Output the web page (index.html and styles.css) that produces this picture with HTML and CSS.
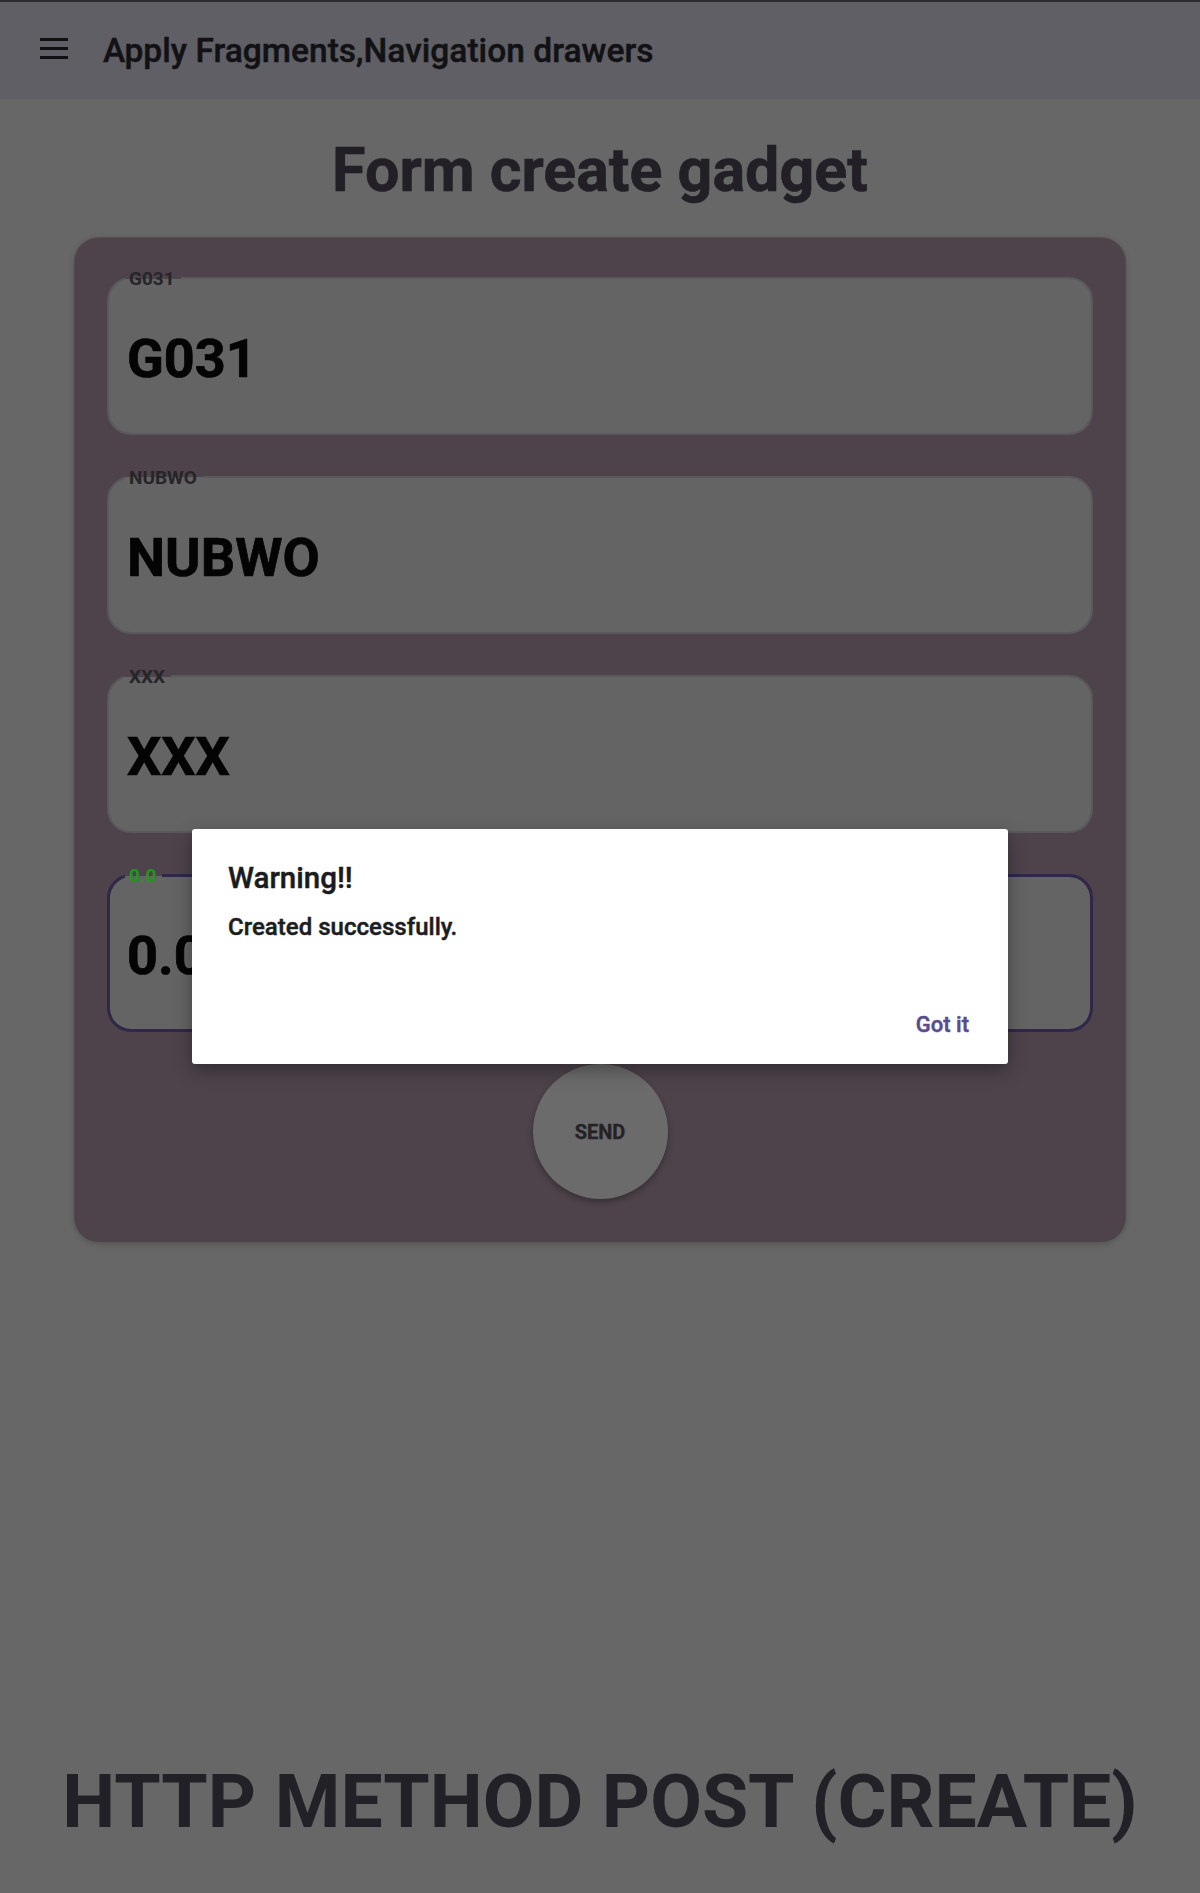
FILE: index.html
```html
<!DOCTYPE html>
<html>
<head>
<meta charset="utf-8">
<link rel="stylesheet" href="styles.css">
</head>
<body>
<div class="page">
  <header class="appbar">
    <svg class="menu" width="28" height="24" viewBox="0 0 28 24"><path d="M0 2.5H28M0 11.5H28M0 20.5H28" stroke="#111114" stroke-width="3"/></svg>
    <span class="appbar-title">Apply Fragments,Navigation drawers</span>
  </header>
  <h1 class="heading">Form create gadget</h1>
  <section class="card">
    <div class="field"><span class="label">G031</span><span class="value">G031</span></div>
    <div class="field"><span class="label">NUBWO</span><span class="value">NUBWO</span></div>
    <div class="field"><span class="label">XXX</span><span class="value">XXX</span></div>
    <div class="field focused"><span class="label">0.0</span><span class="value">0.0</span></div>
    <div class="send">SEND</div>
  </section>
  <div class="footer-title">HTTP METHOD POST (CREATE)</div>
  <div class="dialog">
    <div class="dialog-title">Warning!!</div>
    <div class="dialog-body">Created successfully.</div>
    <div class="dialog-actions"><span class="dialog-btn">Got it</span></div>
  </div>
</div>
</body>
</html>
```
FILE: styles.css
```css
html, body {
  margin: 0;
  padding: 0;
}
body {
  background: #676767;
  font-family: Roboto, "Liberation Sans", sans-serif;
}
.page {
  position: relative;
  width: 1200px;
  height: 1893px;
  overflow: hidden;
  display: flex;
  flex-direction: column;
}
.appbar {
  box-sizing: border-box;
  height: 99px;
  border-top: 2px solid #2c2c30;
  padding: 4px 0 3px 40px;
  background: #5f5f65;
  display: flex;
  align-items: center;
  gap: 35px;
}
.menu {
  display: block;
  margin-bottom: 5px;
}
.appbar-title,
.dialog-title,
.dialog-body,
.dialog-btn {
  font-family: "Roboto Medium", Roboto, "Liberation Sans", sans-serif;
  font-weight: 500;
  -webkit-text-stroke: 0.45px currentColor;
}
.appbar-title {
  font-size: 33.5px;
  line-height: 1;
  color: #121215;
}
.heading {
  margin: 35px 0 0;
  font-size: 61px;
  font-weight: 700;
  line-height: 72px;
  text-align: center;
  color: #222026;
  -webkit-text-stroke: 0.6px currentColor;
}
.card {
  box-sizing: border-box;
  margin: 32px 0 0 75px;
  width: 1050px;
  height: 1003px;
  padding: 39px 32px 0;
  background: #4e434b;
  border-radius: 24px;
  box-shadow: 0 2px 6px rgba(0, 0, 0, 0.25), 0 0 0 1px #5a5159;
  display: flex;
  flex-direction: column;
  gap: 41px;
}
.field {
  position: relative;
  box-sizing: border-box;
  height: 158px;
  border: 2px solid #59595d;
  border-radius: 24px;
  background: #646464;
  display: flex;
  align-items: center;
  padding: 6px 0 0 18px;
}
.field.focused {
  border: 3px solid #2f2848;
  padding-left: 17px;
}
.label {
  position: absolute;
  top: -10px;
  left: 16px;
  padding: 0 6px 0 4px;
  font-size: 19px;
  font-weight: 700;
  line-height: 19px;
  color: #262528;
  background: linear-gradient(#4e434b 50%, #646464 50%);
}
.focused .label {
  top: -11px;
  left: 15px;
  color: #1f961f;
}
.value {
  font-size: 54px;
  font-weight: 700;
  line-height: 1;
  color: #040404;
  -webkit-text-stroke: 0.7px currentColor;
}
.send {
  width: 135px;
  height: 135px;
  margin: -9px auto 0;
  border-radius: 50%;
  background: #6b6b6b;
  box-shadow: 0 3px 6px rgba(0, 0, 0, 0.3);
  display: flex;
  align-items: center;
  justify-content: center;
  font-size: 20px;
  font-weight: 700;
  color: #242227;
  -webkit-text-stroke: 0.3px currentColor;
}
.footer-title {
  margin-top: 522px;
  font-size: 75px;
  font-weight: 700;
  line-height: 76px;
  text-align: center;
  color: #222127;
}
.dialog {
  position: absolute;
  left: 192px;
  top: 829px;
  width: 816px;
  height: 235px;
  box-sizing: border-box;
  padding: 32px 39px 26px 36px;
  background: #ffffff;
  border-radius: 3px;
  box-shadow: 0 6px 18px rgba(0, 0, 0, 0.35);
  display: flex;
  flex-direction: column;
}
.dialog-title {
  font-size: 29.5px;
  line-height: 1.2;
  color: #1b1b1d;
}
.dialog-body {
  margin-top: 17px;
  font-size: 24px;
  line-height: 1.2;
  color: #1d1d1f;
}
.dialog-actions {
  margin-top: auto;
  display: flex;
  justify-content: flex-end;
}
.dialog-btn {
  font-size: 22px;
  line-height: 1.2;
  color: #5a4b8c;
}
```
